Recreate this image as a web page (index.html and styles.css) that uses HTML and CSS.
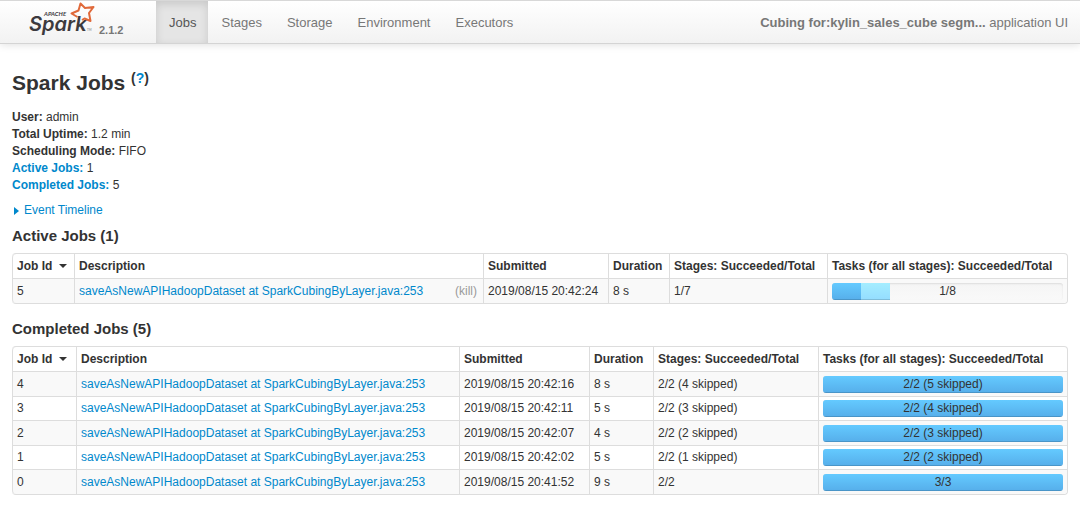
FILE: index.html
```html
<!DOCTYPE html>
<html lang="en">
<head>
<meta charset="utf-8">
<meta name="viewport" content="width=device-width, initial-scale=1">
<title>Spark Jobs</title>
<link rel="stylesheet" href="styles.css">
</head>
<body>
<header class="navbar">
  <a class="brand" href="#">
    <svg class="logo" viewBox="0 0 68 38" role="img" aria-label="Apache Spark">
      <text class="logo-apache" x="16" y="15">APACHE</text>
      <text class="logo-spark" x="1" y="30">Spark</text>
      <path class="logo-star" d="M49.500 16 L43.500 12.500 L50.500 9.500 L52.500 2.500 L57 7 L65.500 6 L61 12 L62.500 20 L56.500 17.500 L54 19"/>
      <text class="logo-tm" x="59" y="30">TM</text>
    </svg>
    <span class="version">2.1.2</span>
  </a>
  <nav class="nav">
    <a class="nav-link active" href="#">Jobs</a>
    <a class="nav-link" href="#">Stages</a>
    <a class="nav-link" href="#">Storage</a>
    <a class="nav-link" href="#">Environment</a>
    <a class="nav-link" href="#">Executors</a>
  </nav>
  <p class="app-name"><strong>Cubing for:kylin_sales_cube segm...</strong> application UI</p>
</header>
<main class="content">
  <h1 class="title">Spark Jobs <sup class="help">(<a href="#">?</a>)</sup></h1>
  <ul class="summary">
    <li><strong>User:</strong> admin</li>
    <li><strong>Total Uptime:</strong> 1.2 min</li>
    <li><strong>Scheduling Mode:</strong> FIFO</li>
    <li><a href="#active"><strong>Active Jobs:</strong></a> 1</li>
    <li><a href="#completed"><strong>Completed Jobs:</strong></a> 5</li>
  </ul>
  <a class="timeline" href="#"><span class="arrow"></span>Event Timeline</a>

  <h2 class="section" id="active">Active Jobs (1)</h2>
  <table class="jobs active-jobs">
    <colgroup><col class="c-id"><col><col class="c-submitted"><col class="c-duration"><col class="c-stages"><col class="c-tasks"></colgroup>
    <thead>
      <tr><th>Job Id <span class="caret"></span></th><th>Description</th><th>Submitted</th><th>Duration</th><th>Stages: Succeeded/Total</th><th>Tasks (for all stages): Succeeded/Total</th></tr>
    </thead>
    <tbody>
      <tr><td>5</td><td><div class="desc"><a href="#">saveAsNewAPIHadoopDataset at SparkCubingByLayer.java:253</a><a class="kill" href="#">(kill)</a></div></td><td>2019/08/15 20:42:24</td><td>8 s</td><td>1/7</td><td><div class="progress"><span class="label">1/8</span><div class="bar done" style="width:12.5%"></div><div class="bar running" style="width:12.5%"></div></div></td></tr>
    </tbody>
  </table>

  <h2 class="section" id="completed">Completed Jobs (5)</h2>
  <table class="jobs completed-jobs">
    <colgroup><col class="c-id"><col><col class="c-submitted"><col class="c-duration"><col class="c-stages"><col class="c-tasks"></colgroup>
    <thead>
      <tr><th>Job Id <span class="caret"></span></th><th>Description</th><th>Submitted</th><th>Duration</th><th>Stages: Succeeded/Total</th><th>Tasks (for all stages): Succeeded/Total</th></tr>
    </thead>
    <tbody>
      <tr><td>4</td><td><a href="#">saveAsNewAPIHadoopDataset at SparkCubingByLayer.java:253</a></td><td>2019/08/15 20:42:16</td><td>8 s</td><td>2/2 (4 skipped)</td><td><div class="progress"><span class="label">2/2 (5 skipped)</span><div class="bar done" style="width:100%"></div></div></td></tr>
      <tr><td>3</td><td><a href="#">saveAsNewAPIHadoopDataset at SparkCubingByLayer.java:253</a></td><td>2019/08/15 20:42:11</td><td>5 s</td><td>2/2 (3 skipped)</td><td><div class="progress"><span class="label">2/2 (4 skipped)</span><div class="bar done" style="width:100%"></div></div></td></tr>
      <tr><td>2</td><td><a href="#">saveAsNewAPIHadoopDataset at SparkCubingByLayer.java:253</a></td><td>2019/08/15 20:42:07</td><td>4 s</td><td>2/2 (2 skipped)</td><td><div class="progress"><span class="label">2/2 (3 skipped)</span><div class="bar done" style="width:100%"></div></div></td></tr>
      <tr><td>1</td><td><a href="#">saveAsNewAPIHadoopDataset at SparkCubingByLayer.java:253</a></td><td>2019/08/15 20:42:02</td><td>5 s</td><td>2/2 (1 skipped)</td><td><div class="progress"><span class="label">2/2 (2 skipped)</span><div class="bar done" style="width:100%"></div></div></td></tr>
      <tr><td>0</td><td><a href="#">saveAsNewAPIHadoopDataset at SparkCubingByLayer.java:253</a></td><td>2019/08/15 20:41:52</td><td>9 s</td><td>2/2</td><td><div class="progress"><span class="label">3/3</span><div class="bar done" style="width:100%"></div></div></td></tr>
    </tbody>
  </table>
</main>
</body>
</html>
```
FILE: styles.css
```css
* { box-sizing: border-box; }
body {
  margin: 0;
  background: #fff;
  color: #333;
  font: 12px/17px "Liberation Sans", Arial, sans-serif;
}
a { color: #08c; text-decoration: none; }

.navbar {
  display: flex;
  height: 44px;
  border-top: 1px solid #d8d8d8;
  border-bottom: 1px solid #d4d4d4;
  background: linear-gradient(#fff, #f2f2f2);
  box-shadow: 0 1px 8px rgba(0, 0, 0, 0.12);
  color: #777;
  font-size: 13px;
}
.brand {
  display: flex;
  align-items: flex-start;
  width: 156px;
  padding-left: 28px;
  color: #777;
}
.logo { width: 68px; height: 38px; }
.logo-spark { font: italic 600 20px Inter, sans-serif; fill: #3c3a3e; }
.logo-apache { font: italic 700 6px Lato, sans-serif; fill: #3c3a3e; }
.logo-tm { font: 3px Lato, sans-serif; fill: #777; }
.logo-star { fill: none; stroke: #e0693a; stroke-width: 2; stroke-linejoin: round; }
.version { padding: 21px 0 0 3px; font-size: 11px; font-weight: bold; }
.nav { display: flex; }
.nav-link { padding: 13px 12px 0 13px; color: #777; }
.nav-link.active {
  background: #e5e5e5;
  box-shadow: inset 0 3px 8px rgba(0, 0, 0, 0.13);
  color: #555;
}
.app-name { margin: 13px 12px 0 auto; }

.content { padding: 27px 12px 12px; }
.title { margin: 0 0 14px; font-size: 21px; line-height: 24px; }
.help { font-size: 14px; line-height: 0; vertical-align: 7px; }
.summary { margin: 0 0 8px; padding: 0; list-style: none; }
.timeline { display: flex; align-items: center; }
.arrow {
  margin: 0 5px 0 2px;
  border: solid transparent;
  border-width: 4px 0 4px 5px;
  border-left-color: #08c;
}
.section { margin: 8px 0; font-size: 15px; line-height: 18px; }

.jobs {
  width: 100%;
  margin-bottom: 16px;
  border: 1px solid #ddd;
  border-left: 0;
  border-radius: 4px;
  border-spacing: 0;
  table-layout: fixed;
}
.jobs th, .jobs td {
  height: 25px;
  padding: 0 4px;
  border-left: 1px solid #ddd;
  text-align: left;
  white-space: nowrap;
}
.jobs th { height: 24px; }
.jobs td { border-top: 1px solid #ddd; }
.jobs tr:nth-child(even) td { height: 24px; }
.jobs tbody tr:nth-child(odd) td { background: #f9f9f9; }
.jobs th:first-child { border-top-left-radius: 4px; }
.jobs tr:last-child td:first-child { border-bottom-left-radius: 4px; }
.jobs tr:last-child td:last-child { border-bottom-right-radius: 4px; }
.caret {
  display: inline-block;
  margin-left: 3px;
  border: solid transparent;
  border-width: 4px 4px 0;
  border-top-color: #333;
  vertical-align: middle;
}
.active-jobs .c-id { width: 62px; }
.active-jobs .c-submitted { width: 125px; }
.active-jobs .c-duration { width: 61px; }
.active-jobs .c-stages { width: 158px; }
.active-jobs .c-tasks { width: 240px; }
.completed-jobs .c-id { width: 64px; }
.completed-jobs .c-submitted { width: 130px; }
.completed-jobs .c-duration { width: 64px; }
.completed-jobs .c-stages { width: 165px; }
.completed-jobs .c-tasks { width: 249px; }
.desc { display: flex; justify-content: space-between; padding-right: 2px; }
.kill { color: #999; }

.progress {
  position: relative;
  display: flex;
  height: 17px;
  overflow: hidden;
  border-radius: 3px;
  background: linear-gradient(#f5f5f5, #f9f9f9);
  box-shadow: inset 0 1px 2px rgba(0, 0, 0, 0.1);
}
.label { position: absolute; inset: 0; text-align: center; }
.bar { box-shadow: inset 0 -1px 0 rgba(0, 0, 0, 0.15); }
.done { background: linear-gradient(#64caff, #56aeea); }
.running { background: linear-gradient(#a4edff, #94ddff); }
```
